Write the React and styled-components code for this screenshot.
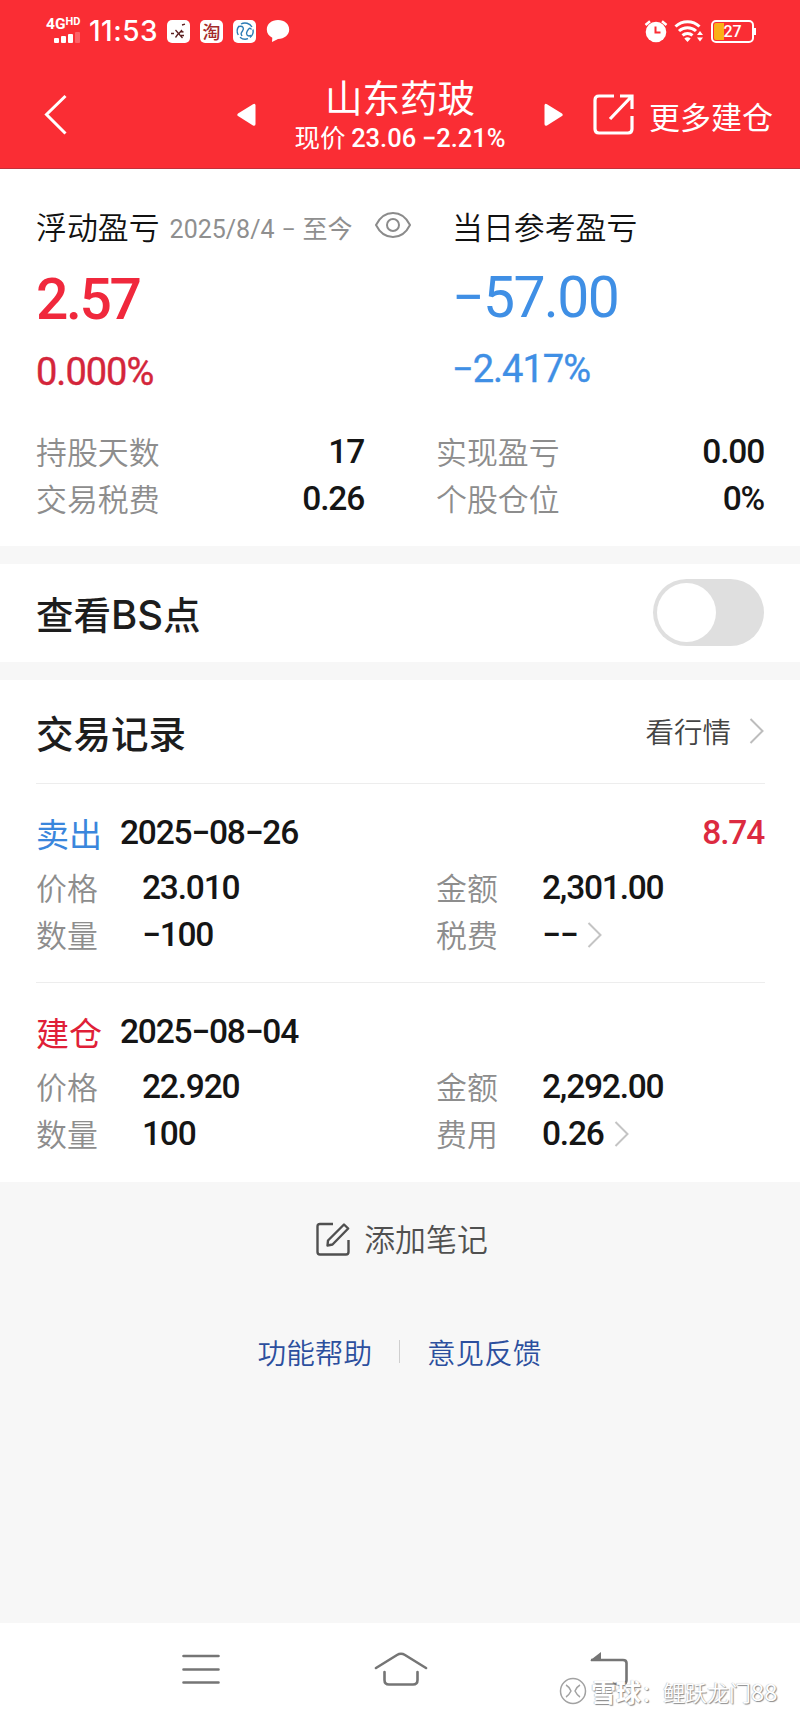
import styled, { createGlobalStyle } from 'styled-components'

const RED = '#fa2d34'
const BLUE = '#3f8fe5'

const details = [
  { label: '持股天数', value: '17' },
  { label: '实现盈亏', value: '0.00' },
  { label: '交易税费', value: '0.26' },
  { label: '个股仓位', value: '0%' },
]

const records = [
  {
    type: '卖出', color: '#3a86dc', date: '2025−08−26', profit: '8.74',
    cells: [
      { label: '价格', value: '23.010' },
      { label: '金额', value: '2,301.00' },
      { label: '数量', value: '−100' },
      { label: '税费', value: '−−', more: true },
    ],
  },
  {
    type: '建仓', color: '#e01f38', date: '2025−08−04',
    cells: [
      { label: '价格', value: '22.920' },
      { label: '金额', value: '2,292.00' },
      { label: '数量', value: '100' },
      { label: '费用', value: '0.26', more: true },
    ],
  },
]

function Chevron({ color = '#c4c4c4' }) {
  return (
    <svg width="16" height="28" viewBox="0 0 16 28" fill="none" stroke={color} strokeWidth="2">
      <path d="M1.500 2 L13.500 14 L1.500 26" />
    </svg>
  )
}

function StatusBar() {
  return (
    <Status>
      <Signal>
        <Network>4G<sup>HD</sup></Network>
        <svg width="28" height="11" viewBox="0 0 28 11" fill="#fff">
          <rect x="0" y="6" width="5" height="5" rx="1" />
          <rect x="7" y="4" width="5" height="7" rx="1" />
          <rect x="14" y="2" width="5" height="9" rx="1" />
          <rect x="21" y="0" width="5" height="11" rx="1" opacity=".25" />
        </svg>
      </Signal>
      <Clock>11:53</Clock>
      <Apps>
        <AppIcon>
          <svg width="22" height="22" viewBox="0 0 22 22" fill="none" stroke="#5a2020" strokeWidth="1.3">
            <path d="M3 13.500h3M7.500 10l7 8M14 10l-3.500 4M10 14l-2.500 3.500M14 5l3-.8M12.500 11.500l3 .5M13 15.500h3" />
          </svg>
        </AppIcon>
        <AppIcon $color="#a32a2a">淘</AppIcon>
        <AppIcon>
          <svg width="22" height="22" viewBox="0 0 22 22" fill="none" stroke="#2b7bb5" strokeWidth="1.4">
            <path d="M7 4a8.200 8.200 0 0 1 11 3M19 9.500a8.200 8.200 0 0 1-3 8M14 18.700a8.200 8.200 0 0 1-8-1.500M4.300 15a8.200 8.200 0 0 1 .700-9" />
            <path d="M5 6.500c4-1 5.500 2 3.500 4.500s-1.500 3-.5 5M17 15.500c-4 1.500-5.500-1.500-3.800-4.300S16 7 17.500 9.500" />
          </svg>
        </AppIcon>
        <svg width="24" height="24" viewBox="0 0 24 24" fill="#fff">
          <path d="M12 1C5.500 1 .8 5 .8 10.500c0 3.800 2.200 6.700 5.500 8.200L6 23l6-3c6.500-.3 11.200-4 11.200-9.500S18.500 1 12 1z" />
        </svg>
      </Apps>
      <StatusRight>
        <svg width="24" height="24" viewBox="0 0 24 24">
          <circle cx="12" cy="13" r="10.300" fill="#fff" />
          <path d="M1.500 6 L6 2.200 M22.500 6 L18 2.200" stroke="#fff" strokeWidth="2.500" />
          <path d="M11.500 7.500v6h5" stroke={RED} strokeWidth="2" fill="none" />
        </svg>
        <svg width="30" height="24" viewBox="0 0 30 24" fill="none" stroke="#fff" strokeWidth="3">
          <path d="M1.500 7.500a17.500 17.500 0 0 1 24 0" />
          <path d="M5 12a12.500 12.500 0 0 1 17 0" />
          <path d="M8.500 16.300a7.500 7.500 0 0 1 10 0" />
          <path d="M10.300 19.500l3.200 3.500 3.200-3.500a5 5 0 0 0-6.400 0z" fill="#fff" stroke="none" />
          <path d="M23 16l3-4 3 4zM23 18.500l3 4 3-4z" fill="#fff" stroke="none" />
        </svg>
        <Battery><span>27</span></Battery>
      </StatusRight>
    </Status>
  )
}

export default function App() {
  return (
    <>
      <GlobalStyle />
      <Page>
        <Header>
          <StatusBar />
          <NavBar>
            <svg width="24" height="42" viewBox="0 0 24 42" fill="none" stroke="#fff" strokeWidth="3">
              <path d="M21.500 2 L2.500 20.500 L21.500 39.500" />
            </svg>
            <Stock>
              <svg width="20" height="24" viewBox="0 0 20 24" fill="#fff">
                <path d="M1 10.500 Q-.5 12 1 13 L16 22.500 Q18.500 23.500 18.500 21 V2.500 Q18.500 0 16 1.200 Z" />
              </svg>
              <StockTitle>
                <StockName>山东药玻</StockName>
                <StockPrice>现价 <b>23.06</b> <b>−2.21%</b></StockPrice>
              </StockTitle>
              <svg width="20" height="24" viewBox="0 0 20 24" fill="#fff">
                <path d="M19 10.500 Q20.500 12 19 13 L4 22.500 Q1.500 23.500 1.500 21 V2.500 Q1.500 0 4 1.200 Z" />
              </svg>
            </Stock>
            <MoreButton>
              <svg width="42" height="42" viewBox="0 0 42 42" fill="none" stroke="#fff" strokeWidth="3.200">
                <path d="M21 2H6Q2 2 2 6V35Q2 39 6 39H35Q39 39 39 35V22" />
                <path d="M17 25 L38.500 2.500 M27 2H39V15" />
              </svg>
              更多建仓
            </MoreButton>
          </NavBar>
        </Header>

        <Summary>
          <Profits>
            <div>
              <ProfitLabel>
                浮动盈亏
                <Period>2025/8/4 − 至今</Period>
                <svg width="36" height="28" viewBox="0 0 36 28" fill="none" stroke="#8b8b8b" strokeWidth="2">
                  <path d="M1 14C5 6 11 2 18 2s13 4 17 12c-4 8-10 12-17 12S5 22 1 14z" />
                  <circle cx="18" cy="14" r="6" />
                </svg>
              </ProfitLabel>
              <Amount $color="#f0283c" $bold>2.57</Amount>
              <Percent $color="#d4263b" $low>0.000%</Percent>
            </div>
            <div>
              <ProfitLabel>当日参考盈亏</ProfitLabel>
              <Amount $color={BLUE}>−57.00</Amount>
              <Percent $color={BLUE}>−2.417%</Percent>
            </div>
          </Profits>
          <Details>
            {details.map((d) => (
              <Detail key={d.label}>
                <Label>{d.label}</Label>
                <Num>{d.value}</Num>
              </Detail>
            ))}
          </Details>
        </Summary>

        <SwitchRow>
          <SectionTitle>查看<span>BS</span>点</SectionTitle>
          <Switch><Knob /></Switch>
        </SwitchRow>

        <Trades>
          <TradesHead>
            <SectionTitle>交易记录</SectionTitle>
            <QuoteLink>看行情 <Chevron color="#bdbdbd" /></QuoteLink>
          </TradesHead>
          {records.map((r) => (
            <Record key={r.date}>
              <RecordHead>
                <Action $color={r.color}>{r.type}</Action>
                <Num>{r.date}</Num>
                {r.profit && <Gain>{r.profit}</Gain>}
              </RecordHead>
              <Cells>
                {r.cells.map((c) => (
                  <Cell key={c.label}>
                    <Label>{c.label}</Label>
                    <Num>{c.value}</Num>
                    {c.more && <Chevron />}
                  </Cell>
                ))}
              </Cells>
            </Record>
          ))}
        </Trades>

        <Footer>
          <AddNote>
            <svg width="34" height="35" viewBox="0 0 34 35" fill="none" stroke="#505050" strokeWidth="2.400" strokeLinejoin="round">
              <path d="M17 2H4Q1.500 2 1.500 4.500V30Q1.500 32.500 4 32.500H30Q32.500 32.500 32.500 30V18" />
              <path d="M12 18.500L28 2.500L32.200 6.500L16.500 22.500L11.500 23.500Z" />
            </svg>
            <span>添加笔记</span>
          </AddNote>
          <Links>
            <a>功能帮助</a>
            <Divider />
            <a>意见反馈</a>
          </Links>
        </Footer>

        <SystemNav>
          <svg width="38" height="32" viewBox="0 0 38 32" stroke="#757575" strokeWidth="2.600" strokeLinecap="round">
            <path d="M1.500 3H36.500M1.500 16.500H36.500M1.500 29.500H36.500" />
          </svg>
          <HomeIcon width="54" height="36" viewBox="0 0 54 36" fill="none" stroke="#757575" strokeWidth="2.600" strokeLinecap="round">
            <path d="M2 17L23 4Q27 1.500 31 4L52 17" />
            <path d="M10.500 21V29Q10.500 33.500 15 33.500H39Q43.500 33.500 43.500 29V21" />
          </HomeIcon>
          <svg width="40" height="36" viewBox="0 0 40 36" fill="none" stroke="#757575" strokeWidth="2.600">
            <path d="M2 9H34Q37.500 9 37.500 12V29Q37.500 33 34 33H7" />
            <path d="M1 9.500L12 1V9.500Z" fill="#757575" stroke="none" />
          </svg>
          <Watermark>
            <svg width="28" height="28" viewBox="0 0 28 28" fill="none" stroke="#a2a2a2" strokeWidth="1.500">
              <circle cx="14" cy="14" r="12.500" fill="#fff" />
              <path d="M7 8c2 1 4 4 5 6-1 2-3 5-5 6M21 8c-2 1-4 4-5 6 1 2 3 5 5 6" />
            </svg>
            <Brand>雪球</Brand>：鲤跃龙门<Digits>88</Digits>
          </Watermark>
        </SystemNav>
      </Page>
    </>
  )
}

const GlobalStyle = createGlobalStyle`
*{
box-sizing:border-box;
}
body{
margin:0;
background:#fff;
font-family:"Noto Sans CJK SC",sans-serif;
font-weight:350;
}
svg{
display:block;
flex-shrink:0;
}
`
const Page = styled.div`
width:800px;
height:1716px;
display:flex;
flex-direction:column;
overflow:hidden;
background:#f7f7f7;
`
const Header = styled.header`
height:169px;
background:${RED};
border-bottom:1px solid #c3303a;
color:#fff;
flex-shrink:0;
`
const Status = styled.div`
height:62px;
display:flex;
align-items:center;
padding:0 44px 0 46px;
font-family:Roboto,sans-serif;
`
const Signal = styled.div`
width:36px;
display:flex;
flex-direction:column;
align-items:flex-end;
gap:2px;
margin-top:-2px;
`
const Network = styled.div`
width:36px;
font-size:15.5px;
line-height:12px;
font-weight:700;
white-space:nowrap;
sup{
font-size:11px;
line-height:0;
vertical-align:4px;
}
`
const Clock = styled.div`
font-family:Inter,sans-serif;
font-size:28px;
font-weight:500;
margin-left:7px;
width:70px;
letter-spacing:0.5px;
`
const Apps = styled.div`
display:flex;
align-items:center;
gap:10px;
margin-left:8px;
`
const AppIcon = styled.div`
width:23px;
height:23px;
border-radius:5px;
background:#fff;
display:flex;
align-items:center;
justify-content:center;
font-family:"Noto Sans CJK SC",sans-serif;
font-size:18px;
line-height:20px;
font-weight:500;
color:${(p) => p.$color};
`
const StatusRight = styled.div`
display:flex;
align-items:center;
gap:6px;
margin-left:auto;
`
const Battery = styled.div`
width:43px;
height:23px;
margin-left:1px;
margin-right:2px;
border:2px solid #fff;
border-radius:5px;
background:linear-gradient(90deg,#fbb016 11px,transparent 11px);
background-clip:content-box;
padding:1px;
display:flex;
align-items:center;
justify-content:center;
font-size:16px;
font-weight:500;
position:relative;
&:after{
content:'';
position:absolute;
right:-4px;
top:6px;
width:2px;
height:7px;
background:#fff;
}
`
const NavBar = styled.nav`
height:106px;
display:flex;
align-items:center;
padding:0 27px 0 44px;
`
const Stock = styled.div`
display:flex;
align-items:center;
margin-left:169px;
`
const StockTitle = styled.div`
width:246px;
margin:2px 20px 0;
text-align:center;
`
const StockName = styled.div`
font-size:37.500px;
line-height:42px;
font-weight:400;
`
const StockPrice = styled.div`
font-size:25.500px;
line-height:38px;
font-weight:400;
white-space:pre;
b{
font-family:Roboto,sans-serif;
font-weight:500;
}
`
const MoreButton = styled.div`
display:flex;
align-items:center;
gap:14px;
margin-left:auto;
font-size:31px;
font-weight:400;
white-space:nowrap;
`
const Summary = styled.section`
height:377px;
background:#fff;
padding:34px 36px 0;
flex-shrink:0;
`
const Profits = styled.div`
display:grid;
grid-template-columns:416px 1fr;
height:227px;
`
const ProfitLabel = styled.div`
display:flex;
align-items:center;
height:44px;
font-size:30.900px;
color:#111;
`
const Period = styled.span`
font-family:Roboto,"Noto Sans CJK SC",sans-serif;
font-size:25px;
font-weight:400;
color:#8f8f8f;
word-spacing:0.7px;
margin:4px 22px 0 10px;
`
const Amount = styled.div`
font-family:Roboto,sans-serif;
font-size:57px;
line-height:66px;
letter-spacing:${(p) => (p.$bold ? -2.4 : -1.6)}px;
font-weight:${(p) => (p.$bold ? 500 : 400)};
color:${(p) => p.$color};
margin-top:${(p) => (p.$bold ? 20 : 18)}px;
`
const Percent = styled.div`
font-family:Roboto,sans-serif;
font-size:38px;
line-height:44px;
letter-spacing:-1px;
font-weight:400;
color:${(p) => p.$color};
-webkit-text-stroke:0.4px ${(p) => p.$color};
margin-top:${(p) => (p.$low ? 17 : 16)}px;
`
const Details = styled.div`
display:grid;
grid-template-columns:328px 328px;
column-gap:72px;
`
const Detail = styled.div`
height:47px;
display:flex;
justify-content:space-between;
align-items:center;
`
const Label = styled.span`
font-size:30.900px;
line-height:46px;
color:#8d8d8d;
margin-bottom:5px;
`
const Num = styled.span`
font-family:Roboto,sans-serif;
font-size:33.500px;
line-height:42px;
font-weight:500;
letter-spacing:-1.2px;
color:#151515;
margin-bottom:3px;
`
const SectionTitle = styled.h2`
margin:0;
font-size:37.500px;
line-height:50px;
font-weight:500;
color:#1d1d1d;
span{
font-family:Inter,sans-serif;
font-size:40px;
line-height:1;
}
`
const SwitchRow = styled.section`
height:98px;
margin:18px 0;
padding:0 36px 1px;
background:#fff;
display:flex;
align-items:center;
justify-content:space-between;
flex-shrink:0;
`
const Switch = styled.div`
width:111px;
height:67px;
border-radius:34px;
background:#dfdfdf;
padding:4px;
`
const Knob = styled.div`
width:59px;
height:59px;
border-radius:50%;
background:#fff;
`
const Trades = styled.section`
height:502px;
background:#fff;
padding:0 35px 0 36px;
flex-shrink:0;
`
const TradesHead = styled.div`
height:103px;
display:flex;
align-items:center;
justify-content:space-between;
`
const QuoteLink = styled.div`
display:flex;
align-items:center;
gap:18px;
font-size:28.500px;
color:#444;
padding-bottom:2px;
`
const Record = styled.article`
height:199px;
border-top:1px solid #ededed;
padding-top:24px;
`
const RecordHead = styled.div`
height:52px;
display:flex;
align-items:center;
`
const Action = styled.span`
width:84px;
font-size:33px;
font-weight:400;
margin-bottom:2px;
color:${(p) => p.$color};
`
const Gain = styled.span`
font-family:Roboto,sans-serif;
font-size:33.500px;
letter-spacing:-1.2px;
font-weight:500;
color:#dc2a40;
margin:0 1px 3px auto;
`
const Cells = styled.div`
display:grid;
grid-template-columns:400px 328px;
padding-top:6px;
`
const Cell = styled.div`
height:47px;
display:flex;
align-items:center;
${Label}{
width:106px;
}
svg{
margin:0 0 3px 10px;
}
`
const Footer = styled.footer`
flex:1;
display:flex;
flex-direction:column;
align-items:center;
`
const AddNote = styled.div`
display:flex;
align-items:center;
gap:14px;
height:46px;
margin-top:34px;
margin-left:4px;
font-size:30.900px;
color:#505050;
span{
margin-bottom:3px;
}
`
const Links = styled.div`
display:flex;
align-items:center;
height:44px;
margin-top:67px;
margin-right:1px;
font-size:28.600px;
color:#2c4f9e;
`
const Divider = styled.i`
width:1px;
height:23px;
background:#cfcfcf;
margin:0 27px;
`
const SystemNav = styled.div`
height:93px;
background:#fff;
display:flex;
align-items:center;
padding:0 171px 2px 182px;
justify-content:space-between;
position:relative;
flex-shrink:0;
`
const HomeIcon = styled.svg`
margin-right:8px;
`
const Watermark = styled.div`
position:absolute;
left:559px;
top:53px;
height:30px;
display:flex;
align-items:center;
white-space:nowrap;
font-size:22px;
line-height:28px;
color:#fff;
text-shadow:1px 1px 1px #888,-0.5px -0.5px 1px #bbb;
`
const Brand = styled.b`
font-size:25px;
font-weight:700;
margin-left:4px;
`
const Digits = styled.span`
font-size:24px;
`
